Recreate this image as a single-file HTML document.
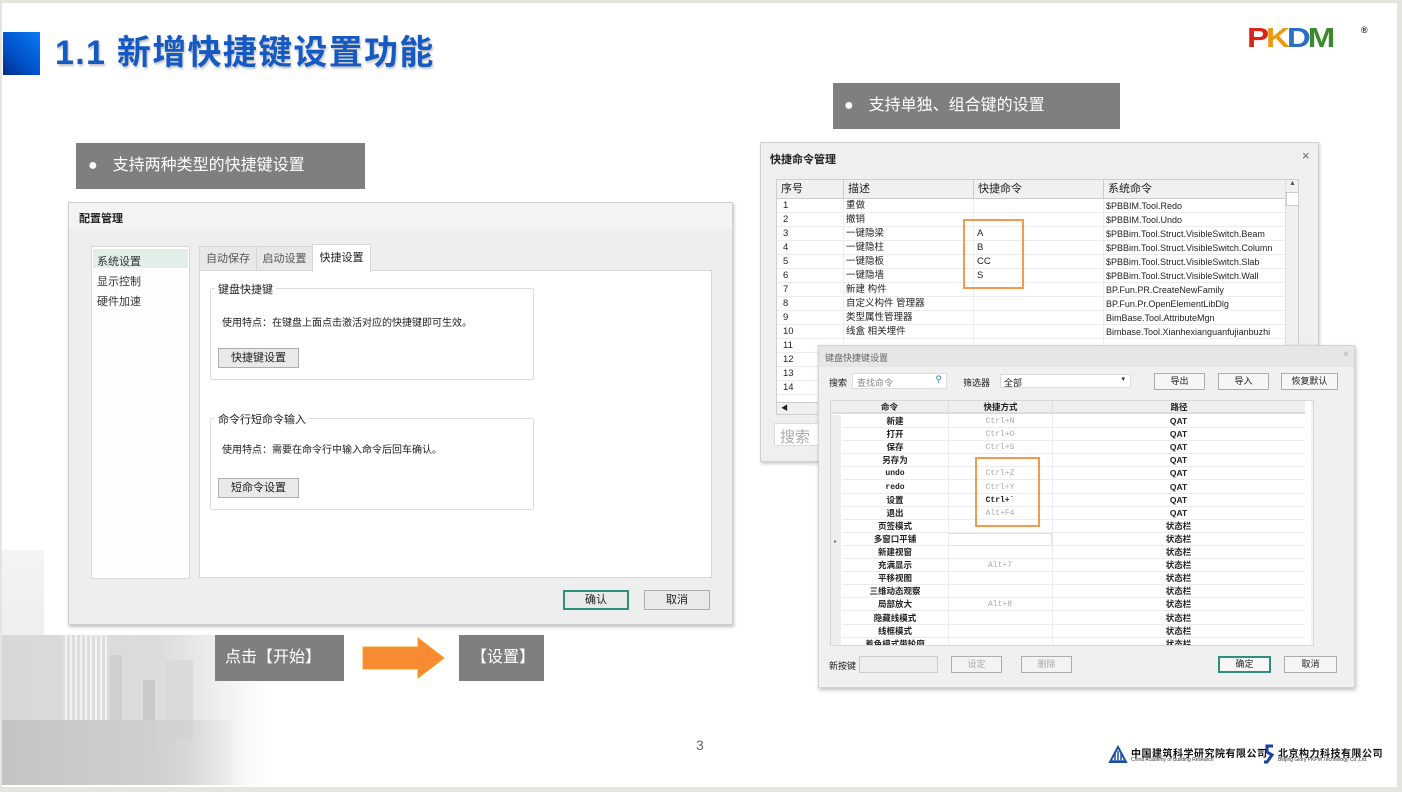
<!DOCTYPE html>
<html><head><meta charset="utf-8"><style>
*{margin:0;padding:0;box-sizing:border-box}
body{width:1402px;height:792px;background:#e6e4df;position:relative;overflow:hidden;font-family:"Liberation Sans","Noto Sans CJK SC",sans-serif;color:#222}
.a{position:absolute}
.slide{left:2px;top:3px;width:1395px;height:784px;background:#fff}
.lbl{background:#7f7f7f;color:#fff;font-size:16px;line-height:46px;height:46px}
.btn{border:1px solid #adadad;background:#e9e9e9;font-size:11px;text-align:center}
.t{font-size:10px;white-space:nowrap}
.row{position:absolute;left:0;right:0;border-bottom:1px solid #ececec}
.row span{position:absolute;top:0}
.krow{position:absolute;left:11px;right:0;height:13.1px;border-bottom:1px solid #ececec;font-size:8.5px;line-height:13px;font-weight:bold}
.krow span{position:absolute;top:0;text-align:center}
</style></head><body>
<div class="a slide"></div>
<div class="a" style="left:2px;top:550px;width:42px;height:100px;background:linear-gradient(#f4f4f4,#eee)"></div>
<div class="a" style="left:2px;top:635px;width:265px;height:150px;background:linear-gradient(90deg,#d8d8d8 0%,#dcdcdc 60%,rgba(255,255,255,0) 100%)"></div>
<div class="a" style="left:62px;top:635px;width:48px;height:110px;background:repeating-linear-gradient(90deg,#ddd 0 3px,#f2f2f2 3px 5px)"></div>
<div class="a" style="left:110px;top:655px;width:12px;height:90px;background:#cfcfcf"></div>
<div class="a" style="left:143px;top:680px;width:12px;height:70px;background:#c9c9c9"></div>
<div class="a" style="left:165px;top:660px;width:28px;height:80px;background:#dadada"></div>
<div class="a" style="left:2px;top:720px;width:240px;height:65px;background:linear-gradient(90deg,#c4c4c4,#cfcfcf 60%,rgba(255,255,255,0))"></div>

<div class="a" style="left:3px;top:32px;width:37px;height:43px;background:linear-gradient(225deg,#0a7cf5,#0050c8 60%,#002f8a)"></div>
<div class="a" style="left:55px;top:30px;font-size:34px;font-weight:bold;color:#1559c2;letter-spacing:1.3px;text-shadow:1px 2px 2px rgba(0,0,0,.25);line-height:46px">1.1 新增快捷键设置功能</div>
<div class="a" style="left:1247px;top:24px;font-size:33px;font-weight:900;letter-spacing:-3px;line-height:32px;font-family:'Liberation Sans',sans-serif;transform:scaleY(0.85);transform-origin:top left"><span style="color:#d9261c">P</span><span style="color:#e99a12">K</span><span style="color:#2a6fc4">D</span><span style="color:#3c8a2e">M</span></div>
<div class="a" style="left:1361px;top:25px;font-size:9px;font-weight:bold">®</div>

<div class="a lbl" style="left:76px;top:143px;width:289px;padding-left:12px">●<span style="margin-left:15px">支持两种类型的快捷键设置</span></div>
<div class="a lbl" style="left:833px;top:83px;width:287px;padding-left:11px">●<span style="margin-left:15px">支持单独、组合键的设置</span></div>
<div class="a lbl" style="left:215px;top:635px;width:129px;padding-left:10px">点击【开始】</div>
<div class="a lbl" style="left:459px;top:635px;width:85px;padding-left:12px">【设置】</div>
<svg class="a" style="left:362px;top:637px" width="84" height="42"><path d="M1 10H56V1L82 21L56 41V32H1Z" fill="#f68b33" stroke="#f5a020"/></svg>

<div class="a" style="left:68px;top:202px;width:665px;height:423px;background:#eeeeee;border:1px solid #cfcfcf;box-shadow:1px 2px 3px rgba(0,0,0,.25)">
 <div class="a" style="left:0;top:0;right:0;height:26px;background:#f3f3f3;font-size:11px;font-weight:bold;padding:7px 0 0 10px">配置管理</div>
 <div class="a" style="left:22px;top:43px;width:99px;height:333px;background:#fdfdfd;border:1px solid #d9d9d9">
  <div class="a" style="left:1px;top:2px;width:95px;height:19px;background:#e2eee8"></div>
  <div class="a t" style="left:5px;top:6px;font-size:11px;color:#333">系统设置</div>
  <div class="a t" style="left:5px;top:26px;font-size:11px;color:#333">显示控制</div>
  <div class="a t" style="left:5px;top:46px;font-size:11px;color:#333">硬件加速</div>
 </div>
 <div class="a" style="left:130px;top:43px;width:58px;height:25px;background:#e8e8e8;border:1px solid #d6d6d6;font-size:11px;color:#555;text-align:center;line-height:24px">自动保存</div>
 <div class="a" style="left:187px;top:43px;width:57px;height:25px;background:#e8e8e8;border:1px solid #d6d6d6;font-size:11px;color:#555;text-align:center;line-height:24px">启动设置</div>
 <div class="a" style="left:243px;top:41px;width:59px;height:28px;background:#fff;border:1px solid #d6d6d6;border-bottom:none;font-size:11px;text-align:center;line-height:27px;z-index:2">快捷设置</div>
 <div class="a" style="left:130px;top:67px;width:513px;height:308px;background:#fff;border:1px solid #d6d6d6">
  <div class="a" style="left:10px;top:17px;width:324px;height:92px;border:1px solid #ddd;border-radius:2px"></div>
  <div class="a t" style="left:15px;top:10px;background:#fff;padding:0 3px;font-size:11px">键盘快捷键</div>
  <div class="a t" style="left:22px;top:43px">使用特点：在键盘上面点击激活对应的快捷键即可生效。</div>
  <div class="a btn" style="left:18px;top:77px;width:81px;height:20px;line-height:18px">快捷键设置</div>
  <div class="a" style="left:10px;top:147px;width:324px;height:92px;border:1px solid #ddd;border-radius:2px"></div>
  <div class="a t" style="left:15px;top:140px;background:#fff;padding:0 3px;font-size:11px">命令行短命令输入</div>
  <div class="a t" style="left:22px;top:170px">使用特点：需要在命令行中输入命令后回车确认。</div>
  <div class="a btn" style="left:18px;top:207px;width:81px;height:20px;line-height:18px">短命令设置</div>
 </div>
 <div class="a btn" style="left:494px;top:387px;width:66px;height:20px;border:2px solid #2f8f7c;line-height:16px">确认</div>
 <div class="a btn" style="left:575px;top:387px;width:66px;height:20px;line-height:18px">取消</div>
</div>

<div class="a" style="left:760px;top:142px;width:559px;height:320px;background:#efefef;border:1px solid #cfcfcf;box-shadow:1px 2px 3px rgba(0,0,0,.2)">
 <div class="a" style="left:9px;top:8px;font-size:11px;font-weight:bold">快捷命令管理</div>
 <div class="a" style="left:541px;top:5px;font-size:13px;color:#666">×</div>
 <div class="a" style="left:15px;top:36px;width:523px;height:236px;background:#fff;border:1px solid #cfcfcf;overflow:hidden">
  <div class="a" style="left:0;top:0;width:508px;height:19px;background:#f0f0f0;border-bottom:1px solid #ccc;font-size:11px;line-height:18px">
   <span class="a" style="left:4px">序号</span><span class="a" style="left:66px;border-left:1px solid #ccc;padding-left:4px;height:19px">描述</span><span class="a" style="left:196px;border-left:1px solid #ccc;padding-left:4px;height:19px">快捷命令</span><span class="a" style="left:326px;border-left:1px solid #ccc;padding-left:4px;height:19px">系统命令</span>
  </div>
  <div class="a" style="left:508px;top:0;width:14px;height:222px;background:#f0f0f0;border-left:1px solid #ddd"><div style="height:12px;font-size:7px;text-align:center;color:#555">▲</div><div style="height:14px;background:#fff;border:1px solid #ccc"></div></div>
  <div class="a" style="left:0;top:19px;width:508px;height:220px;font-size:9.5px;line-height:14px">
   <div class="row" style="top:0;height:14px"><span style="left:6px">1</span><span style="left:69px">重做</span><span style="left:329px;font-size:9px">$PBBIM.Tool.Redo</span></div>
   <div class="row" style="top:14px;height:14px"><span style="left:6px">2</span><span style="left:69px">撤销</span><span style="left:329px;font-size:9px">$PBBIM.Tool.Undo</span></div>
   <div class="row" style="top:28px;height:14px"><span style="left:6px">3</span><span style="left:69px">一键隐梁</span><span style="left:200px">A</span><span style="left:329px;font-size:9px">$PBBim.Tool.Struct.VisibleSwitch.Beam</span></div>
   <div class="row" style="top:42px;height:14px"><span style="left:6px">4</span><span style="left:69px">一键隐柱</span><span style="left:200px">B</span><span style="left:329px;font-size:9px">$PBBim.Tool.Struct.VisibleSwitch.Column</span></div>
   <div class="row" style="top:56px;height:14px"><span style="left:6px">5</span><span style="left:69px">一键隐板</span><span style="left:200px">CC</span><span style="left:329px;font-size:9px">$PBBim.Tool.Struct.VisibleSwitch.Slab</span></div>
   <div class="row" style="top:70px;height:14px"><span style="left:6px">6</span><span style="left:69px">一键隐墙</span><span style="left:200px">S</span><span style="left:329px;font-size:9px">$PBBim.Tool.Struct.VisibleSwitch.Wall</span></div>
   <div class="row" style="top:84px;height:14px"><span style="left:6px">7</span><span style="left:69px">新建 构件</span><span style="left:329px;font-size:9px">BP.Fun.PR.CreateNewFamily</span></div>
   <div class="row" style="top:98px;height:14px"><span style="left:6px">8</span><span style="left:69px">自定义构件 管理器</span><span style="left:329px;font-size:9px">BP.Fun.Pr.OpenElementLibDlg</span></div>
   <div class="row" style="top:112px;height:14px"><span style="left:6px">9</span><span style="left:69px">类型属性管理器</span><span style="left:329px;font-size:9px">BimBase.Tool.AttributeMgn</span></div>
   <div class="row" style="top:126px;height:14px"><span style="left:6px">10</span><span style="left:69px">线盒 相关埋件</span><span style="left:329px;font-size:9px">Bimbase.Tool.Xianhexianguanfujianbuzhi</span></div>
   <div class="row" style="top:140px;height:14px"><span style="left:6px">11</span></div>
   <div class="row" style="top:154px;height:14px"><span style="left:6px">12</span></div>
   <div class="row" style="top:168px;height:14px"><span style="left:6px">13</span></div>
   <div class="row" style="top:182px;height:14px"><span style="left:6px">14</span></div>
   <div class="a" style="left:66px;top:0;width:1px;height:200px;background:#eee"></div>
   <div class="a" style="left:196px;top:0;width:1px;height:200px;background:#eee"></div>
   <div class="a" style="left:326px;top:0;width:1px;height:200px;background:#eee"></div>
  </div>
  <div class="a" style="left:0;top:222px;width:50px;height:14px;background:#f0f0f0;border-top:1px solid #ccc;font-size:7px;padding-left:4px">◀</div>
 </div>
 <div class="a" style="left:202px;top:76px;width:61px;height:70px;border:2px solid #f39a50"></div>
 <div class="a" style="left:13px;top:280px;width:50px;height:23px;background:#fff;border:1px solid #ddd;font-size:15px;color:#aaa;padding:2px 0 0 5px">搜索</div>
</div>

<div class="a" style="left:818px;top:345px;width:537px;height:343px;background:#f0f0f0;border:1px solid #d4d4d4;box-shadow:1px 2px 4px rgba(0,0,0,.25)">
 <div class="a" style="left:0;top:0;right:0;height:21px;background:#e6e6e6;font-size:9px;color:#666;padding:5px 0 0 6px">键盘快捷键设置</div>
 <div class="a" style="left:524px;top:3px;font-size:10px;color:#aaa">×</div>
 <div class="a t" style="left:10px;top:30px;font-size:9px">搜索</div>
 <div class="a" style="left:33px;top:27px;width:95px;height:16px;background:#fff;border:1px solid #ddd;font-size:9px;color:#888;padding:2px 4px">查找命令<span style="position:absolute;right:4px;top:0;color:#4a7ab0">⚲</span></div>
 <div class="a t" style="left:144px;top:30px;font-size:9px">筛选器</div>
 <div class="a" style="left:181px;top:28px;width:131px;height:14px;background:#fff;border:1px solid #ddd;font-size:9px;padding:1px 3px">全部<span style="position:absolute;right:5px;top:0;font-size:7px">▾</span></div>
 <div class="a btn" style="left:335px;top:27px;width:51px;height:17px;line-height:15px;font-size:9px;background:#f6f6f6">导出</div>
 <div class="a btn" style="left:399px;top:27px;width:51px;height:17px;line-height:15px;font-size:9px;background:#f6f6f6">导入</div>
 <div class="a btn" style="left:462px;top:27px;width:57px;height:17px;line-height:15px;font-size:9px;background:#f6f6f6">恢复默认</div>
 <div class="a" style="left:11px;top:54px;width:484px;height:246px;background:#fff;border:1px solid #d8d8d8;overflow:hidden">
  <div class="a" style="left:0;top:0;width:474px;height:13px;background:#eee;border-bottom:2px solid #ddd;font-size:8.5px;font-weight:bold;line-height:12px">
   <span class="a" style="left:0;width:117px;text-align:center">命令</span><span class="a" style="left:117px;width:104px;text-align:center;border-left:1px solid #ddd">快捷方式</span><span class="a" style="left:221px;width:253px;text-align:center;border-left:1px solid #ddd">路径</span>
  </div>
  <div class="a" style="left:0;top:14px;width:10px;height:240px;background:#eee"></div>
  <div class="a" style="left:491px;top:12px;width:2px;height:10px;background:#888"></div>
  <div class="a" style="left:480px;top:0;width:4px;height:246px;background:#f3f3f3"></div>
  <div class="a" style="left:3px;top:137px;font-size:6px;color:#777">▸</div>
  <div class="a" style="left:0;top:14px;width:474px;height:232px">
   <div class="krow" style="top:0"><span style="left:0;width:106px">新建</span><span style="left:106px;width:104px;color:#aaa;font-weight:normal;font-family:'Liberation Mono',monospace;font-size:8px">Ctrl+N</span><span style="left:210px;width:253px">QAT</span></div>
   <div class="krow" style="top:13.1px"><span style="left:0;width:106px">打开</span><span style="left:106px;width:104px;color:#aaa;font-weight:normal;font-family:'Liberation Mono',monospace;font-size:8px">Ctrl+O</span><span style="left:210px;width:253px">QAT</span></div>
   <div class="krow" style="top:26.2px"><span style="left:0;width:106px">保存</span><span style="left:106px;width:104px;color:#aaa;font-weight:normal;font-family:'Liberation Mono',monospace;font-size:8px">Ctrl+S</span><span style="left:210px;width:253px">QAT</span></div>
   <div class="krow" style="top:39.3px"><span style="left:0;width:106px">另存为</span><span style="left:210px;width:253px">QAT</span></div>
   <div class="krow" style="top:52.4px"><span style="left:0;width:106px;font-family:'Liberation Mono',monospace;font-size:8px">undo</span><span style="left:106px;width:104px;color:#aaa;font-weight:normal;font-family:'Liberation Mono',monospace;font-size:8px">Ctrl+Z</span><span style="left:210px;width:253px">QAT</span></div>
   <div class="krow" style="top:65.5px"><span style="left:0;width:106px;font-family:'Liberation Mono',monospace;font-size:8px">redo</span><span style="left:106px;width:104px;color:#aaa;font-weight:normal;font-family:'Liberation Mono',monospace;font-size:8px">Ctrl+Y</span><span style="left:210px;width:253px">QAT</span></div>
   <div class="krow" style="top:78.6px"><span style="left:0;width:106px">设置</span><span style="left:106px;width:104px;font-family:'Liberation Mono',monospace;font-size:8px">Ctrl+`</span><span style="left:210px;width:253px">QAT</span></div>
   <div class="krow" style="top:91.7px"><span style="left:0;width:106px">退出</span><span style="left:106px;width:104px;color:#aaa;font-weight:normal;font-family:'Liberation Mono',monospace;font-size:8px">Alt+F4</span><span style="left:210px;width:253px">QAT</span></div>
   <div class="krow" style="top:104.8px"><span style="left:0;width:106px">页签模式</span><span style="left:210px;width:253px">状态栏</span></div>
   <div class="krow" style="top:117.9px"><span style="left:0;width:106px">多窗口平铺</span><span style="left:106px;width:104px;height:13px;border:1px solid #dde3ea"></span><span style="left:210px;width:253px">状态栏</span></div>
   <div class="krow" style="top:131px"><span style="left:0;width:106px">新建视窗</span><span style="left:210px;width:253px">状态栏</span></div>
   <div class="krow" style="top:144.1px"><span style="left:0;width:106px">充满显示</span><span style="left:106px;width:104px;color:#aaa;font-weight:normal;font-family:'Liberation Mono',monospace;font-size:8px">Alt+7</span><span style="left:210px;width:253px">状态栏</span></div>
   <div class="krow" style="top:157.2px"><span style="left:0;width:106px">平移视图</span><span style="left:210px;width:253px">状态栏</span></div>
   <div class="krow" style="top:170.3px"><span style="left:0;width:106px">三维动态观察</span><span style="left:210px;width:253px">状态栏</span></div>
   <div class="krow" style="top:183.4px"><span style="left:0;width:106px">局部放大</span><span style="left:106px;width:104px;color:#aaa;font-weight:normal;font-family:'Liberation Mono',monospace;font-size:8px">Alt+8</span><span style="left:210px;width:253px">状态栏</span></div>
   <div class="krow" style="top:196.5px"><span style="left:0;width:106px">隐藏线模式</span><span style="left:210px;width:253px">状态栏</span></div>
   <div class="krow" style="top:209.6px"><span style="left:0;width:106px">线框模式</span><span style="left:210px;width:253px">状态栏</span></div>
   <div class="krow" style="top:222.7px"><span style="left:0;width:106px">着色模式带轮廓</span><span style="left:210px;width:253px">状态栏</span></div>
   <div class="a" style="left:117px;top:0;width:1px;height:232px;background:#ececec"></div>
   <div class="a" style="left:221px;top:0;width:1px;height:232px;background:#ececec"></div>
  </div>
 </div>
 <div class="a" style="left:156px;top:111px;width:65px;height:70px;border:2px solid #f39a50"></div>
 <div class="a t" style="left:10px;top:313px;font-size:9px">新按键</div>
 <div class="a" style="left:40px;top:310px;width:79px;height:17px;background:#eee;border:1px solid #ccc"></div>
 <div class="a btn" style="left:132px;top:310px;width:51px;height:17px;line-height:15px;font-size:9px;color:#aaa;background:#f3f3f3">设定</div>
 <div class="a btn" style="left:202px;top:310px;width:51px;height:17px;line-height:15px;font-size:9px;color:#aaa;background:#f3f3f3">删除</div>
 <div class="a btn" style="left:399px;top:310px;width:53px;height:17px;line-height:13px;font-size:9px;background:#f6f6f6;border:2px solid #2f8f7c">确定</div>
 <div class="a btn" style="left:465px;top:310px;width:53px;height:17px;line-height:15px;font-size:9px;background:#f6f6f6">取消</div>
</div>

<div class="a" style="left:696px;top:737px;font-size:14px;color:#666">3</div>
<svg class="a" style="left:1108px;top:745px" width="20" height="18"><path d="M2 17L10 2L18 17Z" fill="none" stroke="#1c4f9c" stroke-width="2"/><path d="M7 15V8M10 15V6M13 15V9M4 16H16" stroke="#1c4f9c" stroke-width="1.5"/></svg>
<div class="a t" style="left:1131px;top:745px;font-size:10px;font-weight:bold;color:#111;letter-spacing:0.5px">中国建筑科学研究院有限公司</div>
<div class="a t" style="left:1131px;top:757px;font-size:5px;color:#333">China Academy of Building Research</div>
<svg class="a" style="left:1262px;top:744px" width="14" height="20"><path d="M11 2H5V8L10 11L5 18H2" fill="none" stroke="#1c3fa0" stroke-width="3"/></svg>
<div class="a t" style="left:1278px;top:745px;font-size:10px;font-weight:bold;color:#111;letter-spacing:0.5px">北京构力科技有限公司</div>
<div class="a t" style="left:1278px;top:757px;font-size:5px;color:#333">Beijing Glory PKPM Technology Co.,Ltd.</div>
</body></html>
